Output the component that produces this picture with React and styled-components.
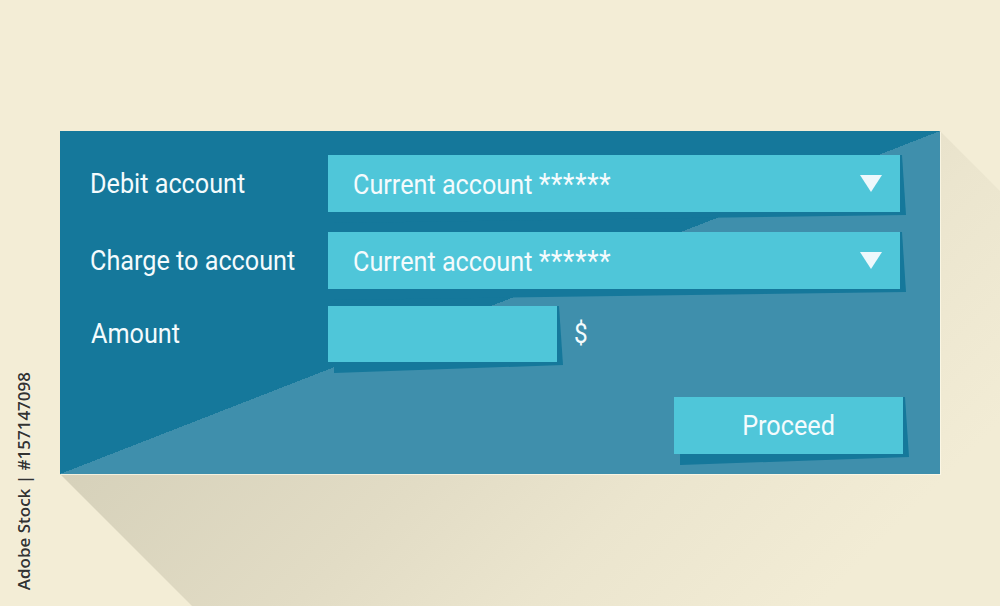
import React from 'react';
import styled, { createGlobalStyle } from 'styled-components';

const GlobalStyle = createGlobalStyle`
    html, body {
        margin: 0;
        padding: 0;
        background-color: #f3edd6;
    }
`;

const DARK = "#15789b";
const LIGHT = "#3f8fac";
const FIELD = "#4fc6d9";
const INK = "#f4fbfd";

const Page = styled.div`
    width: 1000px;
    height: 606px;
    overflow: hidden;
    display: flex;
    isolation: isolate;
    background-color: #f3edd6;
    font-family: 'Roboto', 'Liberation Sans', sans-serif;
`;

const Side = styled.div`
    width: 60px;
    box-sizing: border-box;
    display: flex;
    align-items: flex-end;
    padding: 0 0 16px 14px;
`;

const StockMark = styled.div`
    writing-mode: vertical-rl;
    transform: rotate(180deg);
    font-family: 'Open Sans', 'DejaVu Sans', sans-serif;
    font-weight: 600;
    font-size: 17px;
    line-height: 20px;
    color: #333331;
    text-shadow: 0 0 2px rgba(255, 255, 255, 0.8);
    white-space: nowrap;
`;

const ShadowWrap = styled.div`
    position: relative;
    margin-top: 131px;
    align-self: flex-start;

    &::before {
        content: '';
        position: absolute;
        left: 0;
        top: 0;
        width: 1580px;
        height: 1043px;
        z-index: -1;
        background-image: linear-gradient(135deg,
            #d6d1ba 13%, #e2dcc5 27%, #ebe5ce 36%, #f2ecd5 47%);
        clip-path: polygon(0 343px, 880px 0, 1580px 700px, 700px 1043px);
    }
`;

const Panel = styled.div`
    width: 880px;
    height: 343px;
    box-sizing: border-box;
    padding: 24px 40px 20px 30px;
    isolation: isolate;
    background-image: linear-gradient(to bottom right, ${DARK} 50%, ${LIGHT} 50%);
    box-shadow: 1px 1px 0 rgba(255, 252, 236, 0.7);
    display: flex;
    flex-direction: column;
`;

const Row = styled.div`
    display: grid;
    grid-template-columns: 238px 572px;
    align-items: center;
    margin-top: ${(p) => p.gap || 0}px;
`;

const Cond = styled.span`
    display: inline-block;
    white-space: nowrap;
    transform: scaleX(0.9);
    transform-origin: ${(p) => p.origin || 'left'} center;
`;

const Label = styled.div`
    color: ${INK};
    font-size: 28px;
    line-height: 32px;
    padding-left: ${(p) => p.indent || 0}px;
`;

const Field = styled.div`
    position: relative;
    box-sizing: border-box;
    height: ${(p) => p.h || 57}px;
    width: ${(p) => p.w ? p.w + 'px' : 'auto'};
    background-color: ${FIELD};
    color: ${INK};
    font-size: 28px;

    &::after {
        content: '';
        position: absolute;
        top: 0;
        left: 6px;
        right: -6px;
        bottom: -11px;
        z-index: -1;
        background-color: ${DARK};
        clip-path: polygon(0 0, calc(100% - 4px) 0, 100% calc(100% - 8px), 0 100%);
    }
`;

const Select = styled(Field)`
    display: flex;
    align-items: center;
    justify-content: space-between;
    padding: 0 18px 0 25px;
`;

const Stars = styled.span`
    font-size: 30px;
    letter-spacing: 0.5px;
`;

const Caret = styled.span`
    width: 0;
    height: 0;
    border-left: 11px solid transparent;
    border-right: 11px solid transparent;
    border-top: 17px solid #eef8fc;
`;

const AmountWrap = styled.div`
    display: flex;
    align-items: center;
`;

const Currency = styled.span`
    margin-left: 17px;
    color: ${INK};
    font-size: 27px;
`;

const Actions = styled.div`
    display: flex;
    justify-content: flex-end;
    margin-top: 35px;
    margin-right: -3px;
`;

const Button = styled(Field)`
    display: flex;
    align-items: center;
    justify-content: center;
    cursor: pointer;
`;

const AccountSelect = ({ value, mask }) => (
    <Select>
        <Cond>{value} <Stars>{mask}</Stars></Cond>
        <Caret />
    </Select>
);

const App = () =>
{
    return (
        <>
            <GlobalStyle />
            <Page>
                <Side>
                    <StockMark>Adobe Stock | #157147098</StockMark>
                </Side>
                <ShadowWrap>
                    <Panel>
                        <Row>
                            <Label><Cond>Debit account</Cond></Label>
                            <AccountSelect value="Current account" mask="******" />
                        </Row>
                        <Row gap={20}>
                            <Label><Cond>Charge to account</Cond></Label>
                            <AccountSelect value="Current account" mask="******" />
                        </Row>
                        <Row gap={17}>
                            <Label indent={1}><Cond>Amount</Cond></Label>
                            <AmountWrap>
                                <Field w={229} h={56} />
                                <Currency><Cond>$</Cond></Currency>
                            </AmountWrap>
                        </Row>
                        <Actions>
                            <Button w={229}>
                                <Cond origin="center">Proceed</Cond>
                            </Button>
                        </Actions>
                    </Panel>
                </ShadowWrap>
            </Page>
        </>
    );
}

export default App;
